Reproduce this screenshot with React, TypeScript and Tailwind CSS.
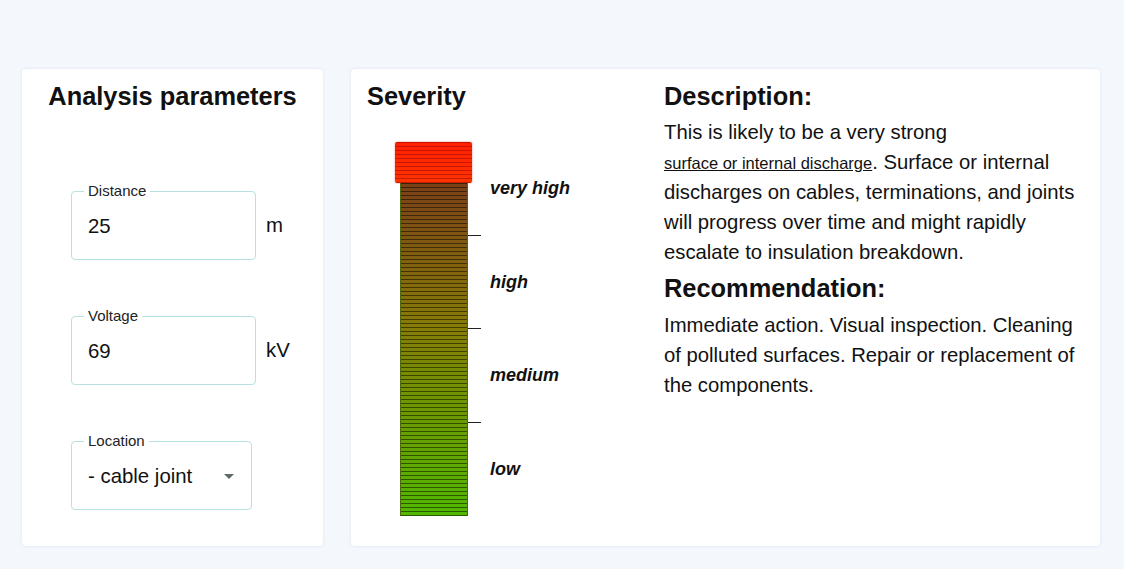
import React from 'react'

type FieldProps = {
  label: string
  value: string
  unit?: string
  width: string
  select?: boolean
}

const Field = ({ label, value, unit, width, select }: FieldProps) => (
  <div className="flex items-center">
    <fieldset className={`${width} h-[78px] rounded-[4px] border border-[#b8e2df] bg-white`}>
      <legend className="ml-[12px] px-[4px] text-[15px] leading-[18px] text-[#222]">{label}</legend>
      <div className="flex h-[59px] items-center justify-between pb-[8px] pl-[16px] pr-[10px]">
        <span className="text-[20.4px] leading-[24px] text-[#111]">{value}</span>
        {select && (
          <svg width="24" height="24" viewBox="0 0 24 24" className="fill-[#5f6a6a]">
            <path d="M7 10l5 5 5-5z" />
          </svg>
        )}
      </div>
    </fieldset>
    {unit && <span className="ml-[10px] pt-[9px] text-[20.4px] text-[#111]">{unit}</span>}
  </div>
)

const levels = ['very high', 'high', 'medium', 'low']

const SeverityBar = () => (
  <div className="mt-[31px] flex pl-[28px]">
    <div className="flex w-[77px] flex-col items-center">
      <div className="h-[41px] w-[77px] rounded-[2px] bg-[image:repeating-linear-gradient(to_bottom,rgba(150,10,0,0.55)_0px,rgba(150,10,0,0.55)_1.5px,transparent_1.5px,transparent_4px),linear-gradient(to_bottom,#ff1e00,#ff3400)] shadow-[0_0_2px_rgba(255,40,0,0.6)]" />
      <div className="h-[333px] w-[68px] border-x border-[#4e6a10] bg-[image:repeating-linear-gradient(to_bottom,rgba(0,0,0,0.5)_0px,rgba(0,0,0,0.5)_1.5px,transparent_1.5px,transparent_4px),linear-gradient(to_bottom,#7a4018,#877a08_42%,#6f9600_66%,#52b800)]" />
    </div>
    <div className="flex flex-col">
      {levels.map((level, i) => (
        <div key={level} className="relative flex h-[93.5px] items-center">
          <span className="pl-[18px] text-[18px] font-bold italic text-[#111]">{level}</span>
          {i < levels.length - 1 && (
            <span className="absolute bottom-0 left-[-4px] h-px w-[13px] bg-[#222]" />
          )}
        </div>
      ))}
    </div>
  </div>
)

export default function App() {
  return (
    <div className="min-h-screen bg-[#f4f7fc] font-['Liberation_Sans',Arial,sans-serif] text-[#111]">
      <div className="flex gap-[28px] pl-[22px] pr-[24px] pt-[69px]">
        <section className="flex h-[477px] w-[301px] flex-col rounded-[4px] bg-white pt-[12px] shadow-[0_0_3px_rgba(180,190,220,0.35)]">
          <h2 className="text-center text-[25.4px] font-bold leading-[30px]">Analysis parameters</h2>
          <div className="mt-[71px] flex flex-col gap-[47px] pl-[49px]">
            <Field label="Distance" value="25" unit="m" width="w-[185px]" />
            <Field label="Voltage" value="69" unit="kV" width="w-[185px]" />
            <Field label="Location" value="- cable joint" width="w-[181px]" select />
          </div>
        </section>

        <section className="flex h-[477px] flex-1 rounded-[4px] bg-white pl-[16px] pt-[12px] shadow-[0_0_3px_rgba(180,190,220,0.35)]">
          <div className="w-[297px]">
            <h2 className="text-[25.4px] font-bold leading-[30px]">Severity</h2>
            <SeverityBar />
          </div>
          <div className="w-[428px]">
            <h2 className="text-[25.4px] font-bold leading-[30px]">Description:</h2>
            <p className="mt-[6px] text-[20.3px] leading-[30px]">
              This is likely to be a very strong{' '}
              <a href="#" className="inline-block text-[16.5px] leading-[20px] text-[#111] underline">
                surface or internal discharge
              </a>
              . Surface or internal discharges on cables, terminations, and joints will progress over time and might rapidly escalate to insulation breakdown.
            </p>
            <h2 className="mt-[6px] text-[25.4px] font-bold leading-[30px]">Recommendation:</h2>
            <p className="mt-[7px] text-[20.3px] leading-[30px]">
              Immediate action. Visual inspection. Cleaning of polluted surfaces. Repair or replacement of the components.
            </p>
          </div>
        </section>
      </div>
    </div>
  )
}
